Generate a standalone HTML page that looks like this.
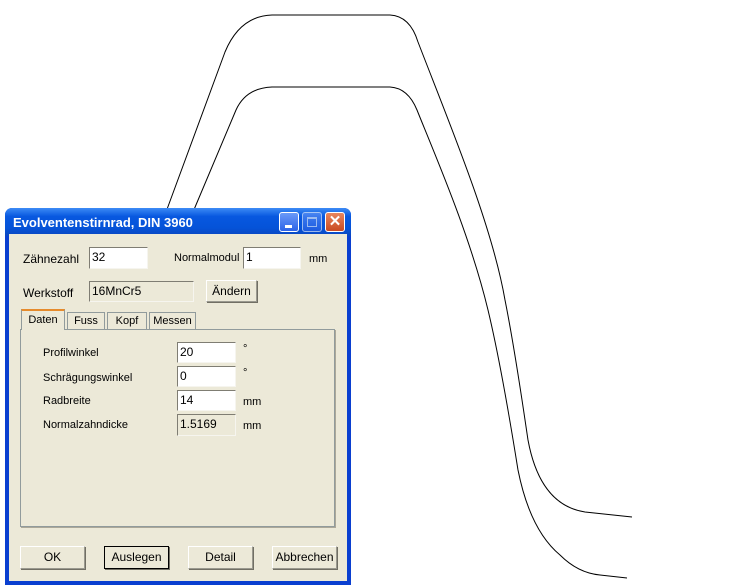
<!DOCTYPE html>
<html><head><style>
*{margin:0;padding:0;box-sizing:border-box}
body{width:749px;height:587px;background:#fff;position:relative;overflow:hidden;font-family:"Liberation Sans",sans-serif;font-size:11px;color:#000}
.a{position:absolute}
.dlg{left:5px;top:208px;width:346px;height:377px;background:#0a3fd0;border-radius:7px 7px 0 0}
.title{left:5px;top:208px;width:346px;height:28px;border-radius:7px 7px 0 0;background:linear-gradient(#3d8bf5,#0858e0 30%,#0553d8 70%,#0a47c0)}
.client{left:9px;top:234px;width:338px;height:347px;background:#ece9d8}
.tb{top:212px;width:20px;height:20px;border:1px solid #fff;border-radius:3px;background:linear-gradient(#6a9af8,#2d63e8)}
.in{background:#fff;border-top:1px solid #7f7d73;border-left:1px solid #7f7d73;border-right:1px solid #f6f5ef;border-bottom:1px solid #f6f5ef;padding:1px 2px;font-size:12px;line-height:16px}
.ro{background:#ece9d8}
.btn{border:1px solid #9a998f;border-top-color:#fff;border-left-color:#fff;box-shadow:1px 1px 0 #716f64;background:#ece9d8;text-align:center;font-size:12px;line-height:20px}
.tab{border:1px solid #919b9c;border-bottom:none;background:#ece9d8;text-align:center;font-size:11px;line-height:17px}
.l{font-size:11px}
</style></head><body>
<svg class="a" style="left:0;top:0" width="749" height="587">
<g fill="none" stroke="#000" stroke-width="1">
<path d="M166 212 L225 52 Q240 16 272 15 L390 15 Q410 16 418 42 C450 125 492 225 505 300 C515 350 522 400 528 440 Q540 505 585 512 L632 517"/>
<path d="M193 212 L236 110 Q246 88 272 87 L390 87 Q408 88 417 110 C435 155 470 235 488 310 C500 360 510 420 518 470 Q530 530 560 555 Q578 573 600 575 L627 578"/>
</g></svg>
<div class="a dlg"></div>
<div class="a title"></div>
<div class="a" style="left:13px;top:215px;color:#fff;font-weight:bold;font-size:13px">Evolventenstirnrad, DIN 3960</div>
<div class="a tb" style="left:279px"><div class="a" style="left:5px;top:12px;width:7px;height:3px;background:#fff"></div></div>
<div class="a tb" style="left:302px;opacity:.6"><div class="a" style="left:4px;top:4px;width:10px;height:10px;border:1px solid #fff;border-top-width:2px"></div></div>
<div class="a tb" style="left:325px;background:linear-gradient(#e8865f,#c94a22);color:#fff;font-weight:bold;font-size:15px;text-align:center;line-height:18px">✕</div>
<div class="a client"></div>
<div class="a l" style="left:23px;top:252px;font-size:12px">Zähnezahl</div>
<div class="a in" style="left:89px;top:247px;width:59px;height:22px">32</div>
<div class="a l" style="left:174px;top:252px">Normalmodul</div>
<div class="a in" style="left:243px;top:247px;width:58px;height:22px">1</div>
<div class="a l" style="left:309px;top:253px">mm</div>
<div class="a l" style="left:23px;top:286px;font-size:12px">Werkstoff</div>
<div class="a in ro" style="left:89px;top:281px;width:105px;height:21px">16MnCr5</div>
<div class="a btn" style="left:206px;top:280px;width:51px;height:22px">Ändern</div>
<div class="a" style="left:20px;top:329px;width:315px;height:198px;border:1px solid #919b9c;box-shadow:1px 1px 0 #aca899;background:#ece9d8"></div>
<div class="a tab" style="left:67px;top:312px;width:38px;height:17px">Fuss</div>
<div class="a tab" style="left:107px;top:312px;width:40px;height:17px">Kopf</div>
<div class="a tab" style="left:149px;top:312px;width:47px;height:17px">Messen</div>
<div class="a tab" style="left:21px;top:309px;width:44px;height:21px;border-top:2px solid #e68b2c;line-height:18px">Daten</div>
<div class="a l" style="left:43px;top:347px">Profilwinkel</div>
<div class="a in" style="left:177px;top:342px;width:59px;height:21px">20</div>
<div class="a l" style="left:243px;top:343px">°</div>
<div class="a l" style="left:43px;top:372px">Schrägungswinkel</div>
<div class="a in" style="left:177px;top:366px;width:59px;height:21px">0</div>
<div class="a l" style="left:243px;top:367px">°</div>
<div class="a l" style="left:43px;top:395px">Radbreite</div>
<div class="a in" style="left:177px;top:390px;width:59px;height:21px">14</div>
<div class="a l" style="left:243px;top:396px">mm</div>
<div class="a l" style="left:43px;top:419px">Normalzahndicke</div>
<div class="a in ro" style="left:177px;top:414px;width:59px;height:22px">1.5169</div>
<div class="a l" style="left:243px;top:420px">mm</div>
<div class="a btn" style="left:20px;top:546px;width:65px;height:23px">OK</div>
<div class="a btn" style="left:104px;top:546px;width:65px;height:23px;border:1px solid #000">Auslegen</div>
<div class="a btn" style="left:188px;top:546px;width:65px;height:23px">Detail</div>
<div class="a btn" style="left:272px;top:546px;width:65px;height:23px">Abbrechen</div>
</body></html>
